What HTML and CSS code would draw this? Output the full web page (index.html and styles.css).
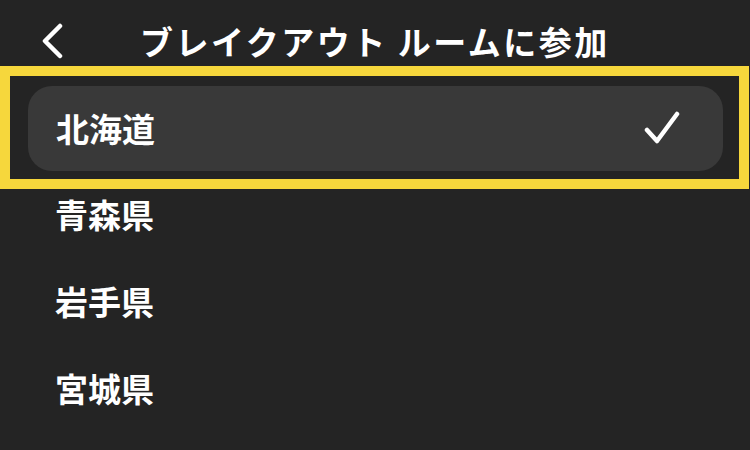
FILE: index.html
```html
<!DOCTYPE html>
<html lang="ja">
<head>
<meta charset="utf-8">
<link rel="stylesheet" href="styles.css">
</head>
<body>
<div class="screen">
  <header class="header">
    <svg class="back" width="24" height="36" viewBox="0 0 24 36"><polyline points="19,3 4,18 19,33" fill="none" stroke="#fff" stroke-width="4.5" stroke-linecap="round" stroke-linejoin="round"/></svg>
    <h1 class="title">ブレイクアウト ルームに参加</h1>
  </header>
  <div class="selected-frame">
    <div class="item item-selected">
      <span class="label">北海道</span>
      <svg class="check" width="40" height="36" viewBox="0 0 40 36"><polyline points="4,19 14,30 34,3" fill="none" stroke="#fff" stroke-width="4.5" stroke-linecap="round" stroke-linejoin="round"/></svg>
    </div>
  </div>
  <ul class="list">
    <li class="item"><span class="label">青森県</span></li>
    <li class="item"><span class="label">岩手県</span></li>
    <li class="item"><span class="label">宮城県</span></li>
  </ul>
</div>
</body>
</html>
```

FILE: styles.css
```css
* { box-sizing: border-box; }
html, body { margin: 0; padding: 0; }
body {
  background: #242424;
  color: #fff;
  font-family: "Noto Sans CJK JP", "Noto Sans", sans-serif;
  width: 750px;
  height: 450px;
  overflow: hidden;
}
.screen { display: flex; flex-direction: column; }
.header {
  height: 66px;
  display: flex;
  align-items: center;
  padding-left: 41px;
  padding-top: 16px;
}
.back { display: block; flex: none; }
.title {
  margin: 0 0 0 75px;
  font-size: 33px;
  font-weight: 700;
  line-height: 1;
  letter-spacing: 2.5px;
}
.selected-frame {
  width: 749px;
  height: 123px;
  border: 10px solid #f6d73c;
  padding: 10px 16px 7px 18px;
}
.item-selected {
  height: 85px;
  background: #393939;
  border-radius: 24px;
  display: flex;
  align-items: center;
  justify-content: space-between;
  padding: 0 40px 0 28px;
}
.label {
  font-size: 33px;
  font-weight: 700;
  line-height: 1;
}
.check { display: block; }
.list { list-style: none; margin: 0; padding: 0; }
.list .item {
  height: 87px;
  display: flex;
  align-items: flex-start;
  padding-left: 55px;
  padding-top: 9px;
}
```
